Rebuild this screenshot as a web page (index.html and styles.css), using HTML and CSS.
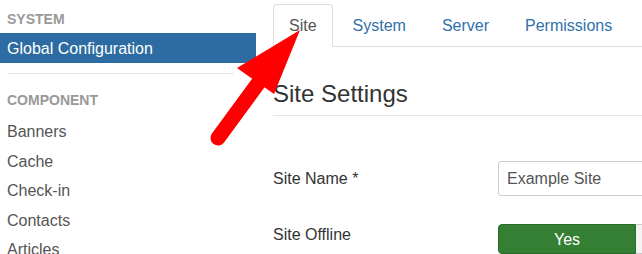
FILE: index.html
```html
<!DOCTYPE html>
<html lang="en">
    <head>
        <meta charset="UTF-8" />
        <title>Global Configuration</title>
        <link rel="stylesheet" href="styles.css">
    </head>
    <body>
        <div class="page">
            <div class="sidebar">
                <div class="nav-header">System</div>
                <div class="nav-item active">Global Configuration</div>
                <hr class="divider" />
                <div class="nav-header nav-header-2">Component</div>
                <div class="nav-item">Banners</div>
                <div class="nav-item">Cache</div>
                <div class="nav-item">Check-in</div>
                <div class="nav-item">Contacts</div>
                <div class="nav-item">Articles</div>
            </div>

            <div class="main">
                <ul class="tabs">
                    <li class="tab active">Site</li>
                    <li class="tab">System</li>
                    <li class="tab">Server</li>
                    <li class="tab">Permissions</li>
                </ul>

                <h2 class="section-title">Site Settings</h2>

                <div class="form-row">
                    <label class="control-label">Site Name *</label>
                    <input class="text-input" type="text" value="Example Site" />
                </div>

                <div class="form-row form-row-top">
                    <label class="control-label label-offline">Site Offline</label>
                    <div class="btn-group">
                        <span class="btn btn-yes">Yes</span>
                        <span class="btn btn-no">No</span>
                    </div>
                </div>
            </div>

            <svg class="arrow" width="642" height="254" viewBox="0 0 642 254">
                <line x1="218" y1="138" x2="262" y2="78" stroke="#ff0000" stroke-width="15" stroke-linecap="round" />
                <polygon points="300,30 237,68 274,94" fill="#ff0000" />
            </svg>
        </div>
    </body>
</html>
```

FILE: styles.css
```css
body {
    margin: 0;
    font-family: "Liberation Sans", Arial, sans-serif;
    font-size: 16px;
    color: #333;
    background: #fff;
}
.page {
    position: relative;
    display: flex;
    width: 642px;
    height: 254px;
    overflow: hidden;
}
.sidebar {
    width: 256px;
    flex-shrink: 0;
    padding-top: 9px;
}
.nav-header {
    font-size: 14px;
    font-weight: bold;
    line-height: 20px;
    color: #999;
    text-transform: uppercase;
    padding-left: 7px;
}
.nav-header-2 {
    margin-top: 16px;
    margin-bottom: 7px;
}
.nav-item {
    line-height: 29.5px;
    padding-left: 7px;
    color: #555;
}
.nav-item.active {
    margin-top: 4px;
    padding-top: 1px;
    line-height: 29px;
    background: #2d6ca2;
    color: #fff;
}
.divider {
    margin: 10px 22px 0 8px;
    border: none;
    border-top: 1px solid #e5e5e5;
}
.main {
    flex: 1;
    min-width: 0;
    margin-left: 17px;
}
.tabs {
    display: flex;
    list-style: none;
    margin: 4px 0 0;
    padding: 0;
    border-bottom: 1px solid #ddd;
}
.tab {
    margin-right: 4px;
    margin-bottom: -1px;
    padding: 11px 15px 10px;
    line-height: 20px;
    color: #3071a9;
    border: 1px solid transparent;
    border-radius: 4px 4px 0 0;
}
.tab.active {
    color: #555;
    border-color: #ddd;
    border-bottom-color: #fff;
    background: #fff;
}
.section-title {
    margin: 32px 0 0;
    padding-bottom: 6px;
    font-size: 24px;
    font-weight: normal;
    line-height: 30px;
    border-bottom: 1px solid #e5e5e5;
}
.form-row {
    display: flex;
    align-items: center;
    margin-top: 45px;
}
.form-row-top {
    align-items: flex-start;
    margin-top: 28px;
}
.control-label {
    width: 225px;
    flex-shrink: 0;
    line-height: 20px;
}
.label-offline {
    padding-top: 1px;
}
.text-input {
    flex-shrink: 0;
    width: 220px;
    height: 35px;
    box-sizing: border-box;
    padding: 0 8px;
    font-family: inherit;
    font-size: 16px;
    line-height: 20px;
    color: #555;
    border: 1px solid #ccc;
    border-radius: 3px;
}
.btn-group {
    display: flex;
    flex-shrink: 0;
}
.btn {
    display: block;
    box-sizing: border-box;
    height: 30px;
    padding-top: 1px;
    line-height: 28px;
    text-align: center;
    border: 1px solid #ccc;
}
.btn-yes {
    width: 138px;
    background: #347f34;
    border-color: #2a6a2a;
    color: #fff;
    border-radius: 4px 0 0 4px;
}
.btn-no {
    width: 80px;
    background: #f3f3f3;
    color: #333;
    border-left: none;
}
.arrow {
    position: absolute;
    left: 0;
    top: 0;
    pointer-events: none;
}
```
